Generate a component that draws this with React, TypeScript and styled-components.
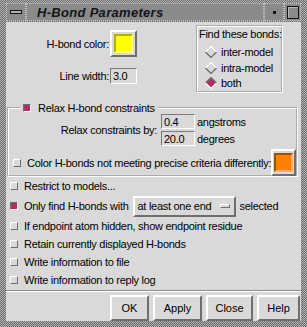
import React from 'react';
import styled, { createGlobalStyle } from 'styled-components';

const BG = '#d9d9d9';
const LIGHT = '#ffffff';
const SHADOW = '#6e6e6e';
const SEL = '#b03060';

const GlobalStyle = createGlobalStyle`
  html, body { margin: 0; padding: 0; background: #ffffff; }
  body { font-family: "Liberation Sans", Arial, Helvetica, sans-serif; color: #000; }
  * { box-sizing: border-box; }
`;

const Frame = styled.div`
  width: 307px;
  height: 327px;
  padding: 3px 6px 6px 6px;
  background: repeating-conic-gradient(#6a6a6a 0 25%, #b4b4b4 0 50%) 0 0 / 2px 2px;
  display: flex;
  flex-direction: column;
`;

const TitleBar = styled.div`
  height: 19px;
  display: flex;
  background: #8a8a8a;
`;

const TitleCell = styled.div<{ $w: number }>`
  width: ${(p) => p.$w}px;
  flex: none;
  border: 1px dotted #c4c4c4;
  display: flex;
  align-items: center;
  justify-content: center;
`;

const MenuBar = styled.div`
  width: 12px;
  height: 4px;
  background: #b0b0b0;
  border: 1px solid #111;
`;

const Title = styled.div`
  flex: 1;
  border: 1px dotted #c4c4c4;
  display: flex;
  align-items: center;
  padding-left: 10px;
  font-size: 13px;
  font-weight: bold;
  font-style: italic;
  letter-spacing: 0.3px;
  color: #151515;
  white-space: nowrap;
`;

const Dot = styled.div`
  width: 3px;
  height: 3px;
  background: #111;
`;

const MaxBox = styled.div`
  width: 12px;
  height: 13px;
  border: 1px solid #111;
  box-shadow: inset 1px 1px 0 #b8b8b8;
`;

const Body = styled.div`
  flex: 1;
  margin-top: 1px;
  background: ${BG};
  display: flex;
  flex-direction: column;
  font-size: 11px;
  letter-spacing: -0.28px;
`;

const Top = styled.div`
  display: flex;
  height: 78px;
`;

const Props = styled.div`
  width: 190px;
  display: grid;
  grid-template-columns: 103px auto;
  column-gap: 1px;
  row-gap: 11px;
  align-content: start;
  align-items: center;
  justify-items: start;
  padding-top: 8px;
`;

const RLabel = styled.span`
  justify-self: end;
  white-space: nowrap;
`;

const Swatch = styled.div`
  width: 27px;
  height: 27px;
  border: 2px solid;
  border-color: ${LIGHT} ${SHADOW} ${SHADOW} ${LIGHT};
  display: flex;
  align-items: center;
  justify-content: center;
  background: ${BG};
`;

const SwatchInner = styled.div<{ $c: string; $d: string; $l: string }>`
  width: 19px;
  height: 19px;
  background: ${(p) => p.$c};
  border: 2px solid;
  border-color: ${(p) => `${p.$d} ${p.$l} ${p.$l} ${p.$d}`};
`;

const Entry = styled.div<{ $w: number; $h?: number }>`
  width: ${(p) => p.$w}px;
  height: ${(p) => p.$h ?? 16}px;
  border: 1px solid;
  border-color: #7a7a7a ${LIGHT} ${LIGHT} #7a7a7a;
  padding-left: 2px;
  display: flex;
  align-items: center;
  white-space: nowrap;
`;

const FindBox = styled.div`
  margin-top: 3px;
  width: 87px;
  height: 68px;
  border: 2px groove #ffffff;
  padding: 1px 0 0 1px;
  display: flex;
  flex-direction: column;
`;

const FindTitle = styled.div`
  height: 13px;
  line-height: 13px;
  margin-bottom: 3px;
  white-space: nowrap;
`;

const RadioRow = styled.div`
  display: flex;
  align-items: center;
  height: 17px;
  padding-left: 6px;
  gap: 4px;
  white-space: nowrap;
`;

const Diamond = ({ on }: { on?: boolean }) => (
  <svg width="12" height="12" viewBox="0 0 12 12" style={{ flex: 'none' }}>
    <polygon points="6,0.5 11.5,6 6,11.5 0.5,6" fill={on ? SEL : BG} />
    <polyline points="0.5,6 6,0.5 11.5,6" fill="none" stroke={on ? SHADOW : LIGHT} strokeWidth="1.3" />
    <polyline points="0.5,6 6,11.5 11.5,6" fill="none" stroke={on ? LIGHT : SHADOW} strokeWidth="1.3" />
  </svg>
);

const Group = styled.fieldset`
  margin: 1px 3px 0 1px;
  padding: 0;
  min-width: 0;
  border: 2px groove #ffffff;
`;

const Legend = styled.legend`
  margin-left: 11px;
  padding: 0 3px;
  display: flex;
  align-items: center;
  gap: 7px;
  height: 13px;
  white-space: nowrap;
`;

const Check = styled.span<{ $on?: boolean }>`
  flex: none;
  width: 8px;
  height: 8px;
  background: ${(p) => (p.$on ? SEL : BG)};
  border: 1px solid;
  border-color: ${(p) =>
    p.$on ? `${SHADOW} ${LIGHT} ${LIGHT} ${SHADOW}` : `${LIGHT} ${SHADOW} ${SHADOW} ${LIGHT}`};
`;

const Constraints = styled.div`
  margin-top: 0;
  display: grid;
  grid-template-columns: 148px 34px auto;
  column-gap: 4px;
  row-gap: 2px;
  align-items: center;
`;

const ConstraintLabel = styled.span`
  grid-row: 1 / span 2;
  justify-self: end;
  white-space: nowrap;
`;

const Unit = styled.span`
  margin-left: -2px;
  white-space: nowrap;
`;

const ColorRow = styled.div`
  margin-top: 3px;
  display: flex;
  align-items: center;
  justify-content: space-between;
  padding-left: 4px;
  margin-bottom: -1px;
`;

const CheckLabel = styled.label`
  display: flex;
  align-items: center;
  gap: 6px;
  white-space: nowrap;
`;

const Rows = styled.div`
  display: flex;
  flex-direction: column;
  padding-left: 4px;
`;

const Row = styled.div<{ $h?: number }>`
  height: ${(p) => p.$h ?? 18}px;
  display: flex;
  align-items: center;
  gap: 6px;
  white-space: nowrap;
`;

const Inline = styled.span`
  display: flex;
  align-items: center;
  gap: 4px;
`;

const OptionMenu = styled.div`
  width: 103px;
  height: 21px;
  border: 2px solid;
  border-color: ${LIGHT} ${SHADOW} ${SHADOW} ${LIGHT};
  display: flex;
  align-items: center;
  justify-content: space-between;
  padding: 0 4px 0 3px;
`;

const OptionBar = styled.span`
  width: 10px;
  height: 4px;
  border: 1px solid;
  border-color: ${LIGHT} ${SHADOW} ${SHADOW} ${LIGHT};
`;

const Separator = styled.div`
  margin-top: 1px;
  height: 2px;
  border-top: 1px solid #8c8c8c;
  border-bottom: 1px solid ${LIGHT};
`;

const ButtonRow = styled.div`
  display: flex;
  justify-content: flex-end;
  gap: 4px;
  padding: 3px 1px 0 0;
`;

const Button = styled.button<{ $w: number }>`
  width: ${(p) => p.$w}px;
  height: 26px;
  font-family: "Liberation Sans", Arial, sans-serif;
  font-size: 11px;
  color: #000;
  background: ${BG};
  border: 2px solid;
  border-color: ${LIGHT} ${SHADOW} ${SHADOW} ${LIGHT};
  padding: 0;
`;

export default function App() {
  return (
    <>
      <GlobalStyle />
      <Frame>
        <TitleBar>
          <TitleCell $w={20}>
            <MenuBar />
          </TitleCell>
          <Title>H-Bond Parameters</Title>
          <TitleCell $w={20}>
            <Dot />
          </TitleCell>
          <TitleCell $w={17}>
            <MaxBox />
          </TitleCell>
        </TitleBar>
        <Body>
          <Top>
            <Props>
              <RLabel>H-bond color:</RLabel>
              <Swatch>
                <SwatchInner $c="#ffff00" $d="#b0b000" $l="#ffff90" />
              </Swatch>
              <RLabel>Line width:</RLabel>
              <Entry $w={27}>3.0</Entry>
            </Props>
            <FindBox>
              <FindTitle>Find these bonds:</FindTitle>
              <RadioRow>
                <Diamond />
                inter-model
              </RadioRow>
              <RadioRow>
                <Diamond />
                intra-model
              </RadioRow>
              <RadioRow>
                <Diamond on />
                both
              </RadioRow>
            </FindBox>
          </Top>
          <Group>
            <Legend>
              <Check $on />
              Relax H-bond constraints
            </Legend>
            <Constraints>
              <ConstraintLabel>Relax constraints by:</ConstraintLabel>
              <Entry $w={34} $h={15}>0.4</Entry>
              <Unit>angstroms</Unit>
              <Entry $w={34} $h={15}>20.0</Entry>
              <Unit>degrees</Unit>
            </Constraints>
            <ColorRow>
              <CheckLabel>
                <Check />
                Color H-bonds not meeting precise criteria differently:
              </CheckLabel>
              <Swatch>
                <SwatchInner $c="#ff8000" $d="#a05000" $l="#ffb060" />
              </Swatch>
            </ColorRow>
          </Group>
          <Rows>
            <Row>
              <Check />
              Restrict to models...
            </Row>
            <Row $h={22}>
              <Check $on />
              <Inline>
                Only find H-bonds with
                <OptionMenu>
                  at least one end
                  <OptionBar />
                </OptionMenu>
                selected
              </Inline>
            </Row>
            <Row>
              <Check />
              If endpoint atom hidden, show endpoint residue
            </Row>
            <Row>
              <Check />
              Retain currently displayed H-bonds
            </Row>
            <Row>
              <Check />
              Write information to file
            </Row>
            <Row>
              <Check />
              Write information to reply log
            </Row>
          </Rows>
          <Separator />
          <ButtonRow>
            <Button $w={39}>OK</Button>
            <Button $w={49}>Apply</Button>
            <Button $w={47}>Close</Button>
            <Button $w={43}>Help</Button>
          </ButtonRow>
        </Body>
      </Frame>
    </>
  );
}
